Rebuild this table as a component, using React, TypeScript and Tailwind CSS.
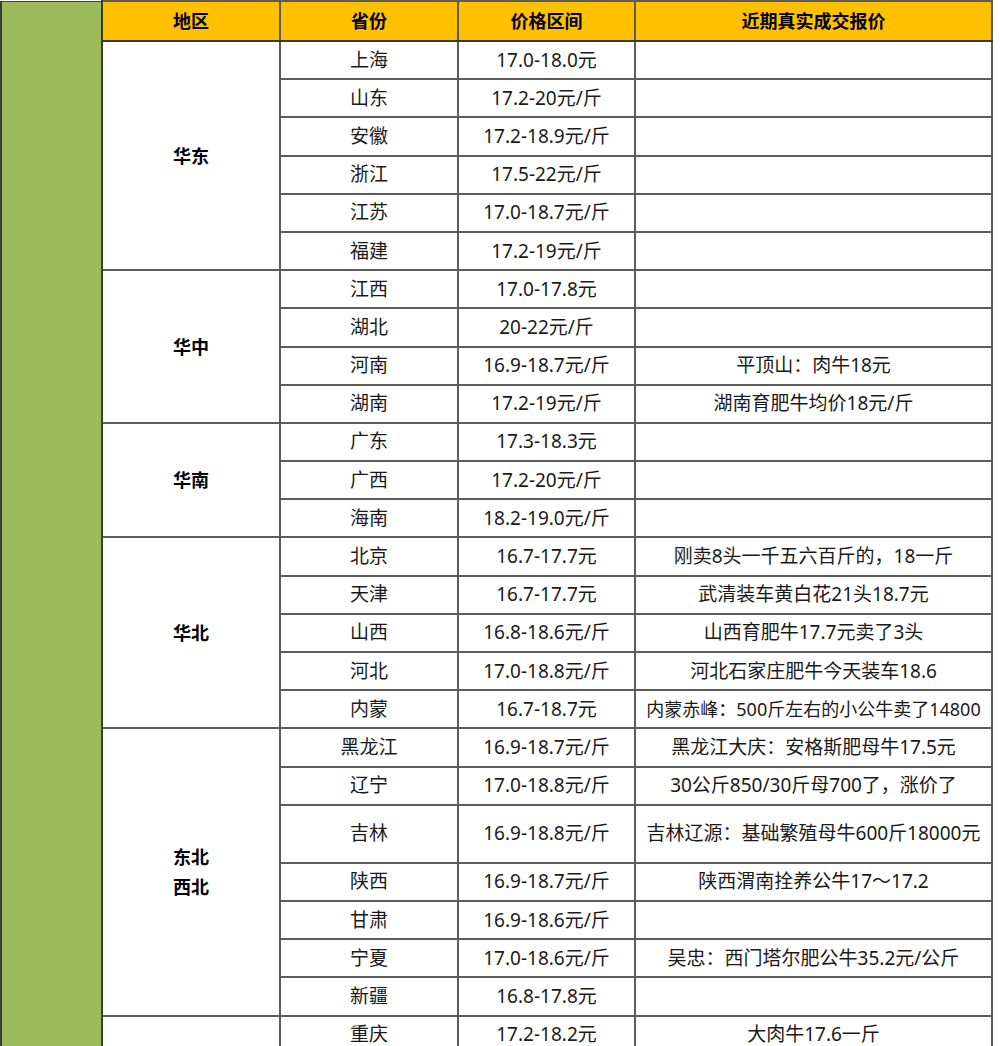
import React from "react";

type Row = { prov: string; price: string; note: string; h?: number };
type Group = { name: string[]; rows: Row[] };

const groups: Group[] = [
  {
    name: ["华东"],
    rows: [
      { prov: "上海", price: "17.0-18.0元", note: "" },
      { prov: "山东", price: "17.2-20元/斤", note: "" },
      { prov: "安徽", price: "17.2-18.9元/斤", note: "" },
      { prov: "浙江", price: "17.5-22元/斤", note: "" },
      { prov: "江苏", price: "17.0-18.7元/斤", note: "" },
      { prov: "福建", price: "17.2-19元/斤", note: "" },
    ],
  },
  {
    name: ["华中"],
    rows: [
      { prov: "江西", price: "17.0-17.8元", note: "" },
      { prov: "湖北", price: "20-22元/斤", note: "" },
      { prov: "河南", price: "16.9-18.7元/斤", note: "平顶山：肉牛18元" },
      { prov: "湖南", price: "17.2-19元/斤", note: "湖南育肥牛均价18元/斤" },
    ],
  },
  {
    name: ["华南"],
    rows: [
      { prov: "广东", price: "17.3-18.3元", note: "" },
      { prov: "广西", price: "17.2-20元/斤", note: "" },
      { prov: "海南", price: "18.2-19.0元/斤", note: "" },
    ],
  },
  {
    name: ["华北"],
    rows: [
      { prov: "北京", price: "16.7-17.7元", note: "刚卖8头一千五六百斤的，18一斤" },
      { prov: "天津", price: "16.7-17.7元", note: "武清装车黄白花21头18.7元" },
      { prov: "山西", price: "16.8-18.6元/斤", note: "山西育肥牛17.7元卖了3头" },
      { prov: "河北", price: "17.0-18.8元/斤", note: "河北石家庄肥牛今天装车18.6" },
      { prov: "内蒙", price: "16.7-18.7元", note: "内蒙赤峰：500斤左右的小公牛卖了14800" },
    ],
  },
  {
    name: ["东北", "西北"],
    rows: [
      { prov: "黑龙江", price: "16.9-18.7元/斤", note: "黑龙江大庆：安格斯肥母牛17.5元" },
      { prov: "辽宁", price: "17.0-18.8元/斤", note: "30公斤850/30斤母700了，涨价了" },
      { prov: "吉林", price: "16.9-18.8元/斤", note: "吉林辽源：基础繁殖母牛600斤18000元", h: 58 },
      { prov: "陕西", price: "16.9-18.7元/斤", note: "陕西渭南拴养公牛17～17.2" },
      { prov: "甘肃", price: "16.9-18.6元/斤", note: "" },
      { prov: "宁夏", price: "17.0-18.6元/斤", note: "吴忠：西门塔尔肥公牛35.2元/公斤" },
      { prov: "新疆", price: "16.8-17.8元", note: "" },
    ],
  },
  {
    name: ["西南"],
    rows: [
      { prov: "重庆", price: "17.2-18.2元", note: "大肉牛17.6一斤" },
      { prov: "四川", price: "17.0-18.5元/斤", note: "" },
      { prov: "贵州", price: "17.2-18.6元/斤", note: "" },
      { prov: "云南", price: "17.0-18.8元/斤", note: "" },
    ],
  },
];

const totalRows = groups.reduce((s, g) => s + g.rows.length, 0);

const cell = "border-2 border-[#5c5c5c] text-center align-middle p-0";

export default function App() {
  return (
    <div
      className="w-[1000px] h-[1046px] overflow-hidden bg-white text-[#1a1a1a] text-[19px] leading-none"
      style={{ fontFamily: '"Noto Sans", "Noto Sans CJK SC", sans-serif' }}
    >
      <table className="table-fixed border-collapse w-[991px] border-t border-t-[#2b4a66]">
        <colgroup>
          <col className="w-[101px]" />
          <col className="w-[178px]" />
          <col className="w-[178px]" />
          <col className="w-[177px]" />
          <col className="w-[357px]" />
        </colgroup>
        <tbody>
          <tr className="h-[40px] bg-[#ffc000]">
            <td
              rowSpan={totalRows + 1}
              className="bg-[#9bbb59] border-2 border-[#3a3a3a] border-t border-t-[#2b4a66] p-0"
            />
            <td className={`${cell} border-b-[#3a3a3a] font-bold text-black text-[18px]`}>地区</td>
            <td className={`${cell} border-b-[#3a3a3a] font-bold text-black text-[18px]`}>省份</td>
            <td className={`${cell} border-b-[#3a3a3a] font-bold text-black text-[18px]`}>价格区间</td>
            <td className={`${cell} border-b-[#3a3a3a] font-bold text-black text-[18px]`}>近期真实成交报价</td>
          </tr>
          {groups.map((g) =>
            g.rows.map((r, i) => (
              <tr key={g.name.join() + r.prov} style={{ height: r.h ?? 38.2 }}>
                {i === 0 && (
                  <td rowSpan={g.rows.length} className={`${cell} font-bold text-black text-[18px] leading-[30px]`}>
                    {g.name.map((n) => (
                      <div key={n}>{n}</div>
                    ))}
                  </td>
                )}
                <td className={cell}>{r.prov}</td>
                <td className={cell}>{r.price}</td>
                <td
                  className={`${cell} whitespace-nowrap ${
                    r.prov === "内蒙" ? "text-[18px]" : ""
                  }`}
                >
                  {r.note}
                </td>
              </tr>
            ))
          )}
        </tbody>
      </table>
    </div>
  );
}
